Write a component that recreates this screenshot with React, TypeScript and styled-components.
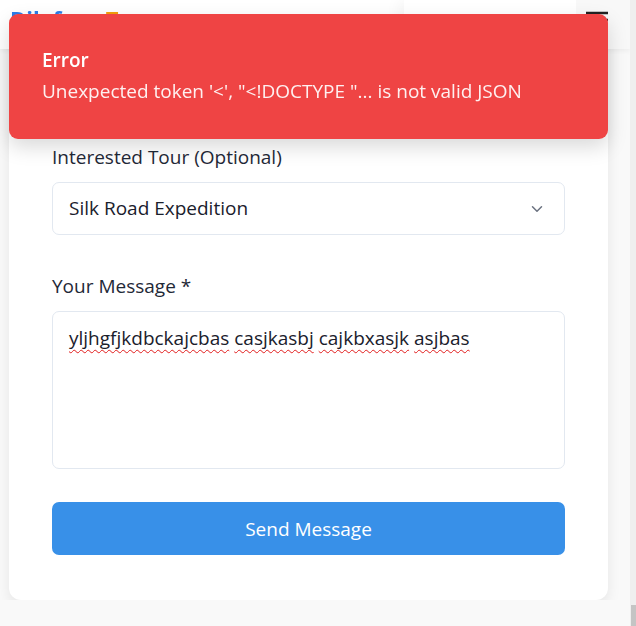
import React from 'react';
import styled, { createGlobalStyle } from 'styled-components';
import { ChevronDown } from 'lucide-react';

const GlobalStyle = createGlobalStyle`
  html, body { margin: 0; padding: 0; background: #f9f9f9; overflow: hidden; }
  body { font-family: "Open Sans", "Noto Sans", sans-serif; color: #1f2937; }
  * { box-sizing: border-box; }
`;

const Header = styled.header`
  position: fixed;
  top: 0;
  left: 0;
  right: 6px;
  height: 49px;
  background: #ffffff;
  box-shadow: 0 2px 6px rgba(0, 0, 0, 0.06);
  display: flex;
  align-items: stretch;
  z-index: 10;
`;

const Logo = styled.div`
  padding: 5px 0 0 10px;
  font-size: 22px;
  font-weight: 700;
  color: #2b7de9;
  line-height: 1.2;
  white-space: nowrap;
  span { color: #f59e0b; margin-left: 9px; }
`;

const Spacer = styled.div`
  flex: 1;
`;

const NavPanel = styled.div`
  width: 172px;
  background: #ffffff;
  box-shadow: -6px 0 14px rgba(0, 0, 0, 0.04);
`;

const MenuArea = styled.div`
  width: 54px;
  background: #f8f8f8;
  display: flex;
  justify-content: flex-start;
  padding: 10px 0 0 9px;
`;

const Toast = styled.div`
  position: fixed;
  top: 14px;
  left: 9px;
  width: 599px;
  height: 125px;
  background: #ef4444;
  border-radius: 9px;
  box-shadow: 0 8px 20px rgba(0, 0, 0, 0.15);
  padding: 34px 33px;
  color: #fff;
  z-index: 20;
`;

const ToastTitle = styled.div`
  font-size: 19px;
  font-weight: 600;
  line-height: 24px;
`;

const ToastMessage = styled.div`
  margin-top: 7px;
  font-size: 19px;
  line-height: 24px;
  color: rgba(255, 255, 255, 0.92);
`;

const Page = styled.main`
  padding: 0 22px 0 9px;
`;

const Card = styled.section`
  width: 599px;
  background: #ffffff;
  border-radius: 0 0 12px 12px;
  box-shadow: 0 6px 14px rgba(0, 0, 0, 0.08);
  padding: 145px 43px 45px;
`;

const Field = styled.div<{ $gap: number }>`
  margin-bottom: ${(p) => p.$gap}px;
`;

const Label = styled.label`
  display: block;
  font-size: 19px;
  line-height: 24px;
  color: #1f2937;
  margin-bottom: 13px;
`;

const SelectWrap = styled.div`
  position: relative;
  height: 53px;
`;

const Select = styled.select`
  appearance: none;
  width: 100%;
  height: 100%;
  border: 1px solid #e2e8f0;
  border-radius: 7px;
  background: #fff;
  padding: 0 16px 1px;
  font-family: inherit;
  font-size: 19px;
  color: #1a202c;
  outline: none;
`;

const Chevron = styled(ChevronDown)`
  position: absolute;
  right: 19px;
  top: 50%;
  transform: translateY(-50%);
  color: #6b7280;
  pointer-events: none;
`;

const MessageBox = styled.div`
  height: 158px;
  border: 1px solid #e2e8f0;
  border-radius: 7px;
  padding: 14px 16px;
  font-size: 19px;
  line-height: 24px;
  color: #1a202c;
`;

const Misspelled = styled.span`
  text-decoration: underline wavy #e11d1d;
  text-decoration-thickness: 1.4px;
  text-underline-offset: 4px;
  text-decoration-skip-ink: none;
`;

const SendButton = styled.button`
  display: block;
  width: 100%;
  height: 53px;
  border: none;
  border-radius: 7px;
  background: #3890e8;
  color: #ffffff;
  font-family: inherit;
  font-size: 19px;
  cursor: pointer;
`;

const ScrollTrack = styled.div`
  position: fixed;
  top: 0;
  right: 0;
  bottom: 0;
  width: 6px;
  background: #efefef;
  display: flex;
  flex-direction: column;
  justify-content: flex-end;
  z-index: 30;
`;

const ScrollThumb = styled.div`
  height: 21px;
  margin-left: 1px;
  background: #c4c4c4;
`;

const MenuIcon = () => (
  <svg width="24" height="22" viewBox="0 0 24 22" fill="none">
    <path d="M1 3h22M1 10h22M1 17h22" stroke="#222" strokeWidth="2.6" />
  </svg>
);

const words = ['yljhgfjkdbckajcbas', 'casjkasbj', 'cajkbxasjk', 'asjbas'];

export default function App() {
  return (
    <>
      <GlobalStyle />
      <Header>
        <Logo>
          Dilafruz<span>Tours</span>
        </Logo>
        <Spacer />
        <NavPanel />
        <MenuArea>
          <MenuIcon />
        </MenuArea>
      </Header>
      <Toast role="alert">
        <ToastTitle>Error</ToastTitle>
        <ToastMessage>Unexpected token '&lt;', "&lt;!DOCTYPE "... is not valid JSON</ToastMessage>
      </Toast>
      <Page>
        <Card>
          <Field $gap={39}>
            <Label>Interested Tour (Optional)</Label>
            <SelectWrap>
              <Select defaultValue="silk">
                <option value="silk">Silk Road Expedition</option>
              </Select>
              <Chevron size={18} strokeWidth={2} />
            </SelectWrap>
          </Field>
          <Field $gap={33}>
            <Label>Your Message *</Label>
            <MessageBox>
              {words.map((w, i) => (
                <React.Fragment key={i}>
                  <Misspelled>{w}</Misspelled>
                  {i < words.length - 1 ? ' ' : ''}
                </React.Fragment>
              ))}
            </MessageBox>
          </Field>
          <SendButton type="button">Send Message</SendButton>
        </Card>
      </Page>
      <ScrollTrack>
        <ScrollThumb />
      </ScrollTrack>
    </>
  );
}
